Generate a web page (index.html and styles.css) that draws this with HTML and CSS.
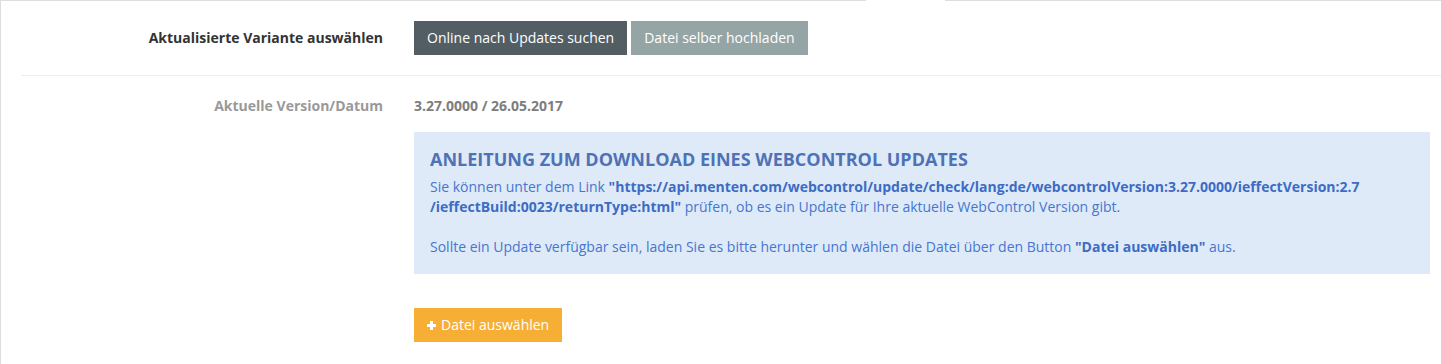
FILE: index.html
```html
<!DOCTYPE html>
<html lang="de">
  <head>
    <meta charset="UTF-8" />
    <meta name="viewport" content="width=device-width, initial-scale=1.0" />
    <title>WebControl Update</title>
    <link rel="stylesheet" href="styles.css">
  </head>
  <body>
    <div class="tab-line">
      <span class="tab-line-left"></span>
      <span class="tab-line-gap"></span>
      <span class="tab-line-right"></span>
    </div>
    <main class="panel">
      <div class="form-row form-row-first">
        <label class="form-label">Aktualisierte Variante auswählen</label>
        <div class="form-value">
          <div class="btn-group">
            <button class="btn btn-dark">Online nach Updates suchen</button>
            <button class="btn btn-grey">Datei selber hochladen</button>
          </div>
        </div>
      </div>
      <div class="form-row">
        <label class="form-label form-label-muted">Aktuelle Version/Datum</label>
        <div class="form-value">
          <p class="version">3.27.0000 / 26.05.2017</p>
          <div class="alert">
            <h4>ANLEITUNG ZUM DOWNLOAD EINES WEBCONTROL UPDATES</h4>
            <p>
              Sie können unter dem Link
              <b>"https://api.menten.com/webcontrol/update/check/lang:de/webcontrolVersion:3.27.0000/ieffectVersion:2.7<wbr>/ieffectBuild:0023/returnType:html"</b>
              prüfen, ob es ein Update für Ihre aktuelle WebControl Version gibt.
              <br><br>
              Sollte ein Update verfügbar sein, laden Sie es bitte herunter und wählen die Datei über den Button
              <b>"Datei auswählen"</b> aus.
            </p>
          </div>
          <button class="btn btn-orange">
            <svg class="icon-plus" viewBox="0 0 9 9" width="9" height="9">
              <rect x="3" y="0" width="3" height="9" fill="#fff" />
              <rect x="0" y="3" width="9" height="3" fill="#fff" />
            </svg>
            Datei auswählen
          </button>
        </div>
      </div>
    </main>
  </body>
</html>
```

FILE: styles.css
```css
body {
  margin: 0;
  background-color: #fff;
  font-family: "Open Sans", "Liberation Sans", sans-serif;
  font-size: 14px;
  line-height: 20px;
  color: #333;
}

/* top border with a gap under the active tab */
.tab-line {
  display: flex;
  height: 1px;
}
.tab-line-left {
  width: 866px;
  background-color: #ddd;
}
.tab-line-gap {
  width: 79px;
}
.tab-line-right {
  flex: 1;
  background-color: #ddd;
}

.panel {
  border-left: 1px solid #ddd;
  padding-left: 20px;
  height: 363px;
  box-sizing: border-box;
}

.form-row {
  display: flex;
  gap: 31px;
  padding: 20px 11px 0 0;
}

.form-row-first {
  padding-bottom: 20px;
  border-bottom: 1px solid #eee;
  align-items: center;
}

.form-label {
  flex: 0 0 362px;
  text-align: right;
  font-weight: bold;
  color: #333;
}

.form-label-muted {
  color: #999;
}

.form-value {
  flex: 1;
}

.btn-group {
  display: flex;
  gap: 4px;
}

.btn {
  border: none;
  border-radius: 0;
  padding: 7px 13px;
  font-family: inherit;
  font-size: 14px;
  line-height: 20px;
  color: #fff;
  cursor: pointer;
}

.btn-dark {
  background-color: #535e64;
}

.btn-grey {
  background-color: #95a5a6;
}

.btn-orange {
  display: flex;
  align-items: center;
  gap: 5px;
  margin-top: 34px;
  background-color: #f6ae34;
}

.version {
  margin: 0 0 16px;
  font-weight: bold;
  color: #7d7d7d;
}

.alert {
  background-color: #dfeaf8;
  padding: 17px 16px;
  color: #4676d0;
}

.alert h4 {
  margin: 0 0 8px;
  font-size: 18px;
  line-height: 20px;
  font-weight: bold;
  color: #4f72b6;
}

.alert p {
  margin: 0;
}

.alert b {
  color: #3d6cc4;
}
```
